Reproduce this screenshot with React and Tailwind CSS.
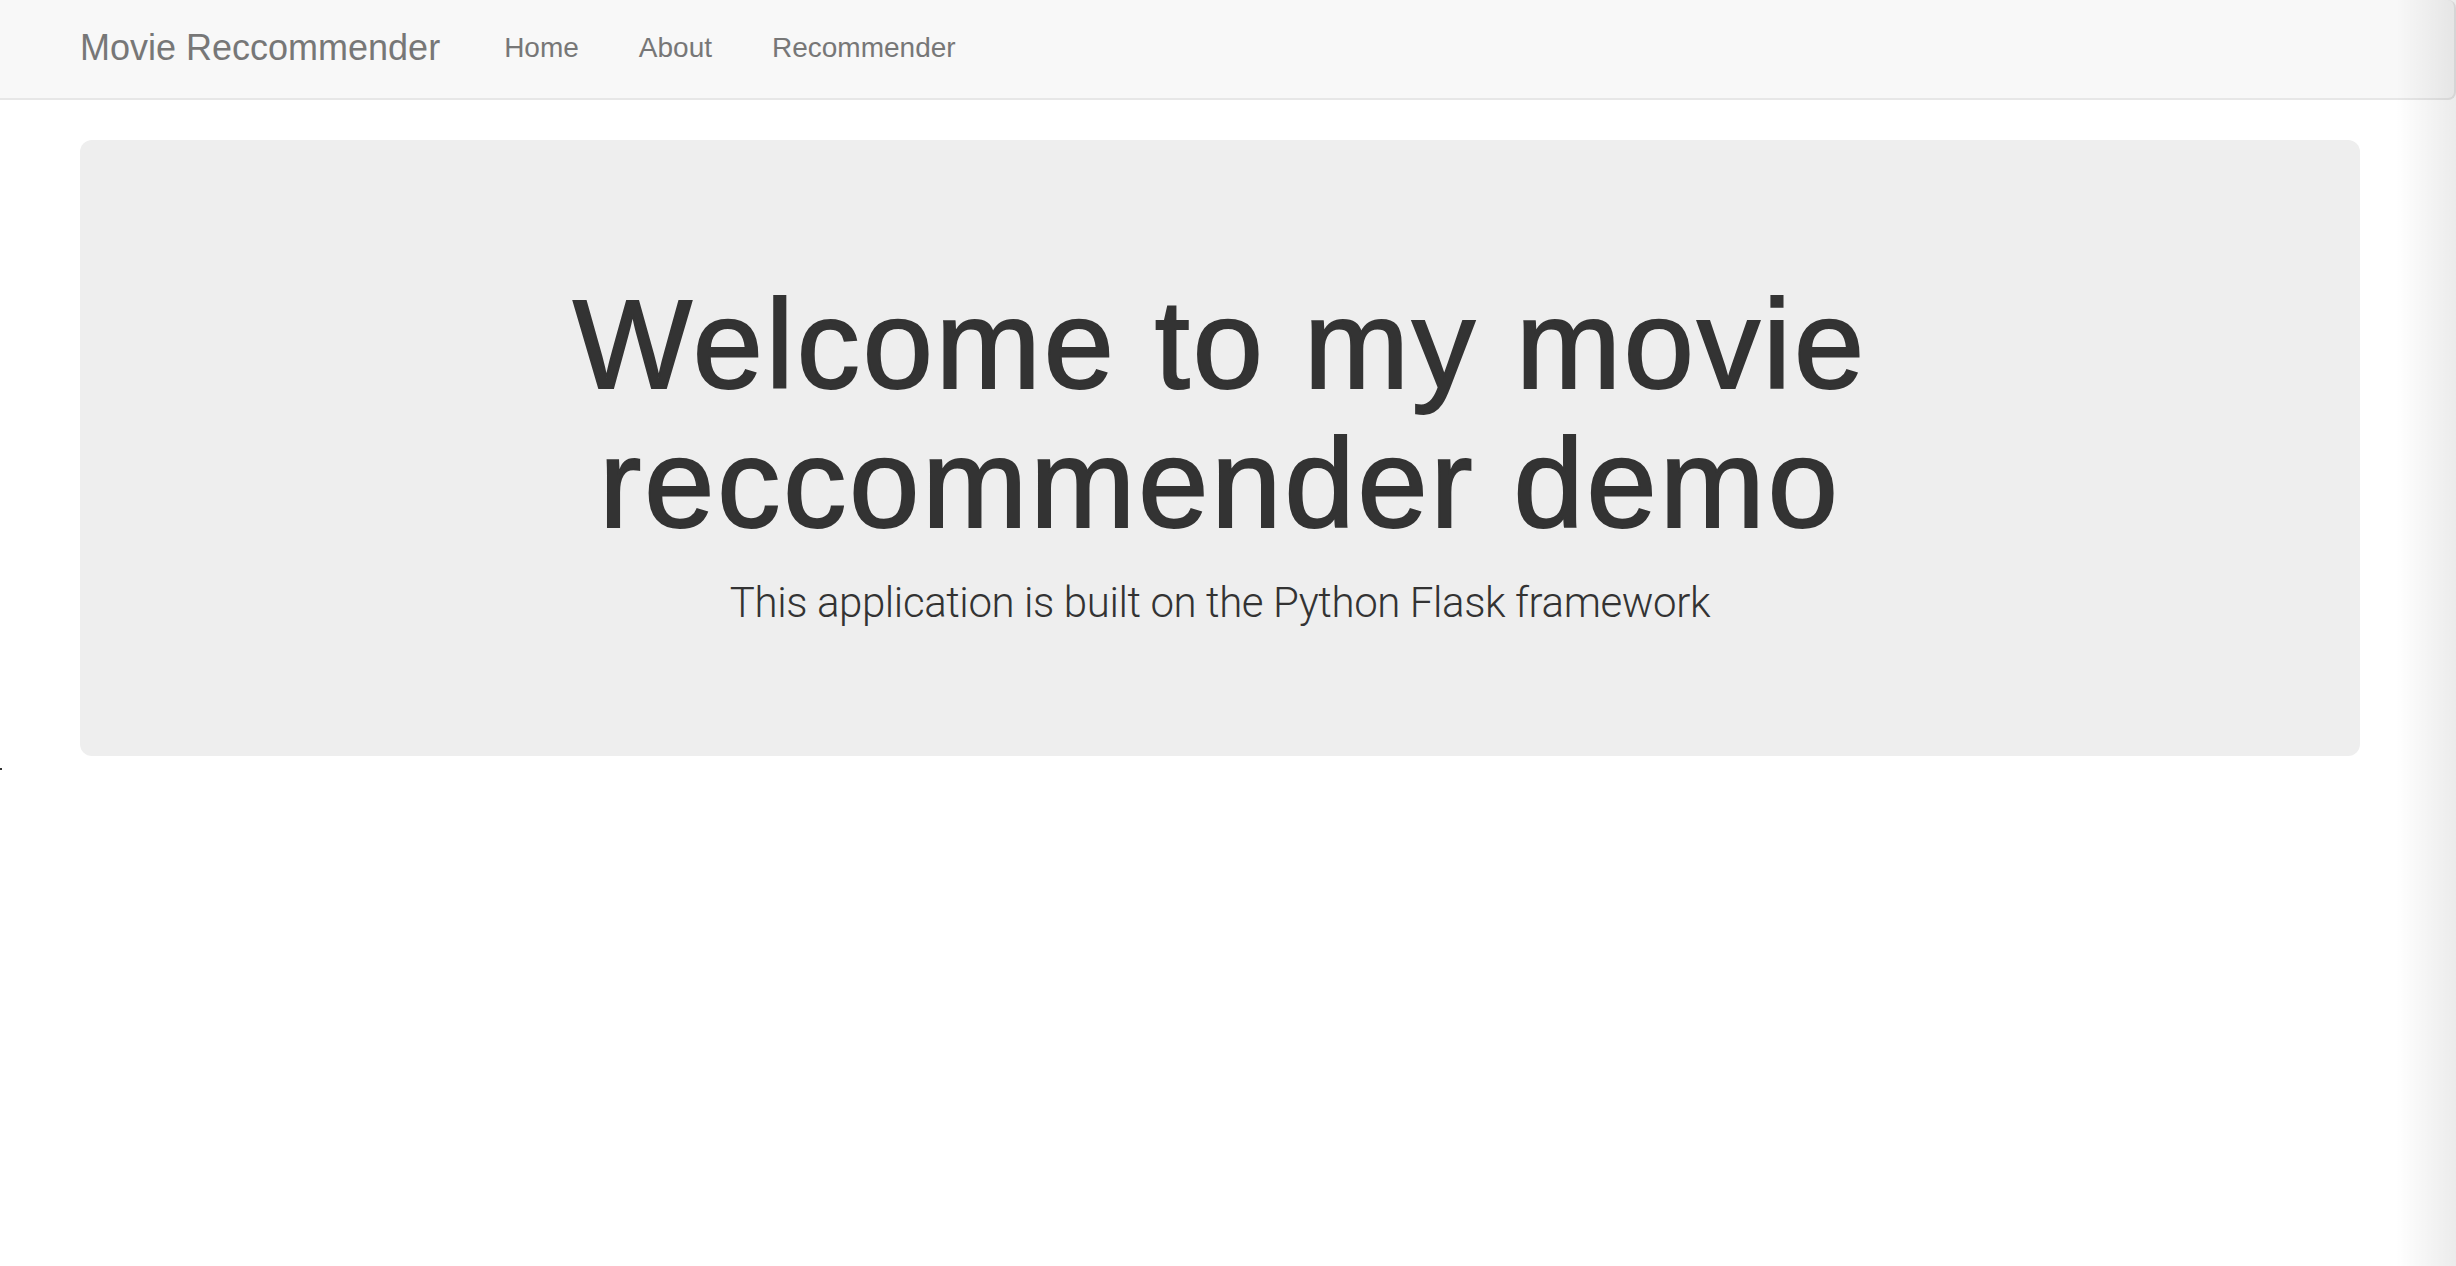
import React from 'react';

const NAV_LINKS = ['Home', 'About', 'Recommender'];

const App = () => {
    return (
        <div className="relative h-[1266px] w-full overflow-hidden bg-white text-[#333] font-['Liberation_Sans',Arial,sans-serif]">
            {/* navbar */}
            <div className="flex h-[100px] items-start bg-[#f8f8f8] border-b-2 border-r-2 border-[#e7e7e7] rounded-r-[8px]">
                <a className="ml-[80px] pr-[34px] pt-[28px] text-[36px] leading-[40px] text-[#777]">Movie Reccommender</a>
                <ul className="flex">
                    {NAV_LINKS.map(link => (
                        <li key={link}>
                            <a className="block px-[30px] pt-[28px] text-[28px] leading-[40px] text-[#777]">{link}</a>
                        </li>
                    ))}
                </ul>
            </div>

            {/* jumbotron */}
            <div className="ml-[80px] mt-[40px] w-[2280px] rounded-[12px] bg-[#eee] px-[120px] pt-[96px] pb-[93px] text-center">
                <h1 className="mt-[40px] mb-[20px] text-[126px] leading-[1.1] font-medium tracking-[3px] text-[#333] [-webkit-text-stroke:2px_#333]">
                    Welcome to my movie reccommender demo
                </h1>
                <p className="mb-[30px] text-[42px] leading-[60px] font-light tracking-[-0.4px] text-[#333] font-['Roboto','Liberation_Sans',sans-serif]">
                    This application is built on the Python Flask framework
                </p>
            </div>

            <span className="absolute left-0 top-[768px] h-[2px] w-[2px] bg-[#333]" />

            {/* scrollbar track shade */}
            <div className="pointer-events-none absolute right-0 top-0 h-full w-[60px] bg-linear-to-r from-transparent to-[rgba(0,0,0,0.08)]" />
        </div>
    );
};

export default App;
